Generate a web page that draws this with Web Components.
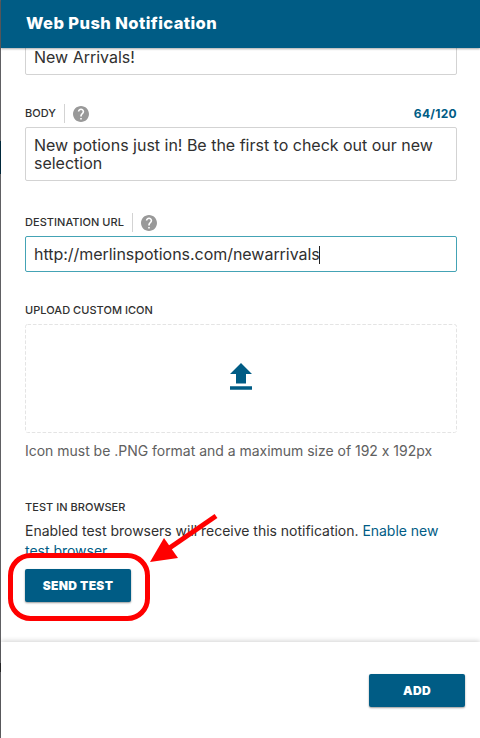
<!DOCTYPE html>
<html lang="en">
<head>
<meta charset="utf-8">
<title>Web Push Notification</title>
<style>
html, body { margin: 0; width: 480px; height: 738px; overflow: hidden; background: #fff; }
body { font-family: Inter, "Liberation Sans", sans-serif; color: #303030; font-feature-settings: "calt" 0; }
</style>
</head>
<body>
<push-panel></push-panel>
<script>
const define = (name, html) => {
  const t = document.createElement('template');
  t.innerHTML = html;
  customElements.define(name, class extends HTMLElement {
    constructor() {
      super();
      this.attachShadow({ mode: 'open' }).append(t.content.cloneNode(true));
    }
  });
};

define('help-icon', `
<style>:host{display:block;width:16px;height:16px} svg{display:block}</style>
<svg width="16" height="16" viewBox="2 2 20 20"><path fill="#999" d="M12 2C6.48 2 2 6.48 2 12s4.480 10 10 10 10-4.480 10-10S17.520 2 12 2zm1 17h-2v-2h2v2zm2.070-7.750l-.9.920C13.450 12.900 13 13.500 13 15h-2v-.5c0-1.100.45-2.100 1.170-2.830l1.240-1.260c.37-.36.59-.86.59-1.410 0-1.100-.9-2-2-2s-2 .9-2 2H8c0-2.210 1.790-4 4-4s4 1.790 4 4c0 .88-.36 1.680-.93 2.250z"/></svg>`);

define('field-label', `
<style>
:host{display:flex;align-items:center;height:20px;font-size:11px;font-weight:500;letter-spacing:.04px;white-space:nowrap;line-height:20px}
.end{margin-left:auto;color:#005c85;font-weight:700;font-size:12px;letter-spacing:.3px;padding-top:2px}
</style>
<slot></slot><slot name="help"></slot><span class="end"><slot name="count"></slot></span>`);

define('label-help', `
<style>:host{display:flex;align-items:center;margin-left:8px} i{width:1px;height:19px;background:#d3d3d3;margin-right:8px} help-icon{margin-top:1px}</style>
<i></i><help-icon></help-icon>`);

define('text-field', `
<style>
:host{display:block;box-sizing:border-box;border:1px solid #d3d3d3;border-radius:2px;padding:8px;font-size:16px;line-height:18px;letter-spacing:-.01px;white-space:nowrap;background:#fff}
:host([focused]){border-color:#44a3b5;letter-spacing:-.035px}
</style><slot></slot>`);

define('text-caret', `<style>:host{display:inline-block;width:1px;height:18px;background:#222;vertical-align:-3.5px;margin-left:-.5px}</style>`);

define('upload-zone', `
<style>:host{display:flex;align-items:center;justify-content:center;height:109px;position:relative} svg{display:block} .frame{position:absolute;left:0;top:0}</style>
<svg class="frame" width="432" height="109"><rect x=".5" y=".5" width="431" height="108" rx="2" fill="none" stroke="#e4e4e4" stroke-dasharray="3.6 1.8"/></svg>
<svg width="22" height="27" viewBox="0 0 22 27" style="margin-top:-4px"><path fill="#005c85" d="M11 0L0 11h6v9.500h10V11h6zM0 23.300h22v3.500H0z"/></svg>`);

define('action-button', `
<style>:host{display:flex;align-items:center;justify-content:center;box-sizing:border-box;height:33px;border-radius:2px;background:#005c85;color:#fff;font-size:12px;font-weight:900;letter-spacing:.35px;line-height:15px;white-space:nowrap;box-shadow:0 1px 2px rgba(0,0,0,.4)}</style><slot></slot>`);

define('panel-header', `
<style>:host{display:flex;align-items:center;box-sizing:border-box;height:48px;padding:0 24px 2px 25px;background:#005c85;color:#fff;font-size:16.500px;font-weight:800;letter-spacing:.42px;position:relative;z-index:1;white-space:nowrap;box-shadow:0 1px 2px rgba(0,0,0,.35)}</style><slot></slot>`);

define('panel-footer', `
<style>:host{display:flex;justify-content:flex-end;box-sizing:border-box;height:96px;padding:32px 15px 0 0;background:#fff;box-shadow:0 -1px 5px rgba(0,0,0,.18);position:relative}</style><slot></slot>`);

define('callout-mark', `
<style>:host{position:absolute;left:0;top:500px;z-index:3;pointer-events:none} svg{display:block}</style>
<svg width="240" height="130" viewBox="0 500 240 130"><rect x="10.500" y="555.500" width="137" height="63" rx="20" fill="none" stroke="red" stroke-width="5"/><path d="M216 516L168 549" stroke="red" stroke-width="5"/><path fill="red" d="M150 562L164 538L178 558z"/></svg>`);

define('page-edge', `
<style>:host{display:block;width:1px;height:738px;background:linear-gradient(#606063 0 141px,#00283b 141px 174px,#606063 174px 663px,#28282a 663px 672px,#606063 672px)}</style>`);

define('push-panel', `
<style>
:host{display:grid;grid-template-columns:1px 1fr;width:480px;height:738px;position:relative;overflow:hidden}
main{display:flex;flex-direction:column;height:738px;min-width:0}
.scroll{height:594px;overflow:hidden;padding:0 23px 0 24px;box-sizing:border-box;display:flex;flex-direction:column}
.scroll>*{flex:none}
.first{height:36px;margin-top:-9px}
.body{height:54px;margin-top:4px}
.url{height:36px;margin-top:4px}
.hint{font-size:14px;line-height:20px;letter-spacing:-.02px;color:#606060;margin-top:8px;white-space:nowrap}
.test{font-size:14px;line-height:20px;letter-spacing:-.02px;margin-top:4px;white-space:nowrap}
.link{color:#005c85}
.send{width:106px;margin-top:8px}
</style>
<page-edge></page-edge>
<main>
<panel-header><span>Web Push Notification</span></panel-header>
<div class="scroll">
<text-field class="first"><span>New Arrivals!</span></text-field>
<field-label style="margin-top:28px"><span>BODY</span><label-help slot="help"></label-help><span slot="count">64/120</span></field-label>
<text-field class="body"><span>New potions just in! Be the first to check out our new</span><br><span>selection</span></text-field>
<field-label style="margin-top:31px"><span>DESTINATION URL</span><label-help slot="help"></label-help></field-label>
<text-field class="url" focused><span>http://merlinspotions.com/newarrivals</span><text-caret></text-caret></text-field>
<field-label style="margin-top:28px"><span>UPLOAD CUSTOM ICON</span></field-label>
<upload-zone style="margin-top:4px"></upload-zone>
<div class="hint"><span>Icon must be .PNG format and a maximum size of 192 x 192px</span></div>
<field-label style="margin-top:36px"><span>TEST IN BROWSER</span></field-label>
<div class="test"><span>Enabled test browsers will receive this notification. <span class="link">Enable new</span></span><br><span class="link">test browser</span></div>
<action-button class="send"><span>SEND TEST</span></action-button>
</div>
<panel-footer><action-button style="width:96px"><span>ADD</span></action-button></panel-footer>
</main>
<callout-mark></callout-mark>`);
</script>
</body>
</html>
